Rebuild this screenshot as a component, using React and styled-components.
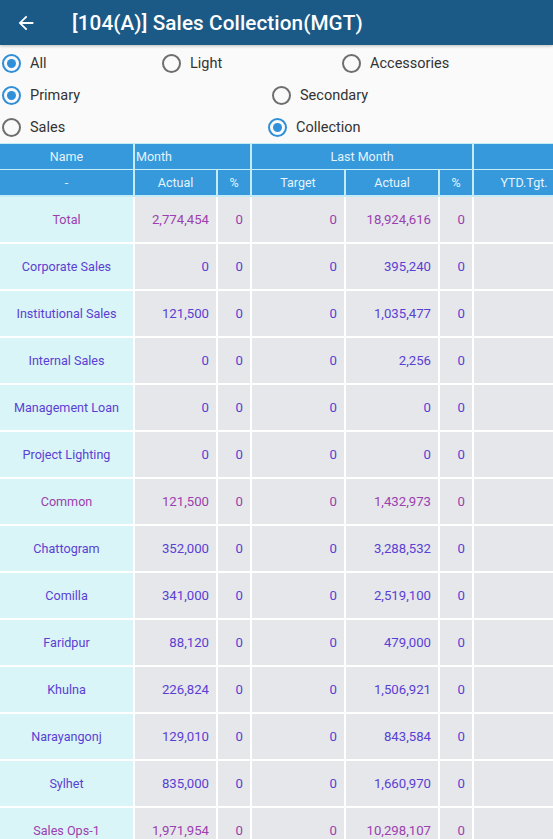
import React from "react";
import styled, { createGlobalStyle } from "styled-components";

const GlobalStyle = createGlobalStyle`
  html, body {
    margin: 0;
    padding: 0;
    background: #fafafa;
    font-family: Roboto, "Noto Sans", sans-serif;
    overflow: hidden;
  }
`;

const COLS = "133px 81px 32px 92px 92px 32px 100px";

const rows = [
  ["Total", "2,774,454", "0", "0", "18,924,616", "0", true],
  ["Corporate Sales", "0", "0", "0", "395,240", "0"],
  ["Institutional Sales", "121,500", "0", "0", "1,035,477", "0"],
  ["Internal Sales", "0", "0", "0", "2,256", "0"],
  ["Management Loan", "0", "0", "0", "0", "0"],
  ["Project Lighting", "0", "0", "0", "0", "0"],
  ["Common", "121,500", "0", "0", "1,432,973", "0", true],
  ["Chattogram", "352,000", "0", "0", "3,288,532", "0"],
  ["Comilla", "341,000", "0", "0", "2,519,100", "0"],
  ["Faridpur", "88,120", "0", "0", "479,000", "0"],
  ["Khulna", "226,824", "0", "0", "1,506,921", "0"],
  ["Narayangonj", "129,010", "0", "0", "843,584", "0"],
  ["Sylhet", "835,000", "0", "0", "1,660,970", "0"],
  ["Sales Ops-1", "1,971,954", "0", "0", "10,298,107", "0", true],
];

//!라디오 그룹
const radioRows = [
  {
    cols: "160px 180px 1fr",
    items: [
      { label: "All", checked: true },
      { label: "Light" },
      { label: "Accessories" },
    ],
  },
  {
    cols: "270px 1fr",
    items: [{ label: "Primary", checked: true }, { label: "Secondary" }],
  },
  {
    cols: "266px 1fr",
    items: [{ label: "Sales" }, { label: "Collection", checked: true }],
  },
];

const App = () => {
  return (
    <Page>
      <GlobalStyle />
      <TopBar>
        <BackIcon viewBox="0 0 24 24">
          <path d="M20 11H7.83l5.59-5.59L12 4l-8 8 8 8 1.41-1.41L7.83 13H20v-2z" />
        </BackIcon>
        <Title>[104(A)] Sales Collection(MGT)</Title>
      </TopBar>

      <Filters>
        {radioRows.map((row, idx) => (
          <RadioRow key={idx} $cols={row.cols}>
            {row.items.map((item) => (
              <RadioItem key={item.label}>
                <Circle $checked={item.checked} />
                <RadioLabel>{item.label}</RadioLabel>
              </RadioItem>
            ))}
          </RadioRow>
        ))}
      </Filters>

      <TableWrap>
        <HeadGrid>
          <HeadCell>Name</HeadCell>
          <HeadCell $span={2} $align="left">
            Month
          </HeadCell>
          <HeadCell $span={3}>Last Month</HeadCell>
          <HeadCell />
          <HeadCell>-</HeadCell>
          <HeadCell>Actual</HeadCell>
          <HeadCell>%</HeadCell>
          <HeadCell>Target</HeadCell>
          <HeadCell>Actual</HeadCell>
          <HeadCell>%</HeadCell>
          <HeadCell>YTD.Tgt.</HeadCell>
        </HeadGrid>

        <BodyGrid>
          {rows.map((r) => (
            <React.Fragment key={r[0]}>
              <NameCell $sum={r[6]}>{r[0]}</NameCell>
              <NumCell $sum={r[6]}>{r[1]}</NumCell>
              <NumCell $sum={r[6]}>{r[2]}</NumCell>
              <NumCell $sum={r[6]}>{r[3]}</NumCell>
              <NumCell $sum={r[6]}>{r[4]}</NumCell>
              <NumCell $sum={r[6]}>{r[5]}</NumCell>
              <NumCell />
            </React.Fragment>
          ))}
        </BodyGrid>
      </TableWrap>
    </Page>
  );
};
export default App;

const Page = styled.div`
  width: 553px;
  height: 839px;
  overflow: hidden;
  background: #fafafa;
`;

const TopBar = styled.div`
  height: 45px;
  background: #1b5a87;
  display: flex;
  align-items: center;
  padding-left: 15px;
  box-shadow: 0 1px 3px rgba(0, 0, 0, 0.25);
  position: relative;
  z-index: 1;
`;

const BackIcon = styled.svg`
  width: 22px;
  height: 22px;
  fill: #ffffff;
  margin-right: 35px;
`;

const Title = styled.h1`
  margin: 0;
  color: #ffffff;
  font-size: 20.7px;
  font-weight: 500;
  letter-spacing: 0.1px;
`;

const Filters = styled.div`
  padding: 2px 0 0 0;
`;

const RadioRow = styled.div`
  display: grid;
  grid-template-columns: ${(p) => p.$cols};
  height: 32px;
  align-items: center;
`;

const RadioItem = styled.div`
  display: flex;
  align-items: center;
  padding-left: 2px;
`;

const Circle = styled.span`
  box-sizing: border-box;
  width: 19px;
  height: 19px;
  border-radius: 50%;
  border: 2px solid ${(p) => (p.$checked ? "#2f8fd9" : "#6e6e6e")};
  display: flex;
  align-items: center;
  justify-content: center;
  margin-right: 9px;

  &::after {
    content: "";
    width: 9px;
    height: 9px;
    border-radius: 50%;
    background: ${(p) => (p.$checked ? "#2f8fd9" : "transparent")};
  }
`;

const RadioLabel = styled.span`
  font-size: 14.5px;
  color: #333333;
`;

const TableWrap = styled.div`
  width: 575px;
`;

const HeadGrid = styled.div`
  display: grid;
  grid-template-columns: ${COLS};
  grid-template-rows: 25px 25px;
  column-gap: 2px;
  row-gap: 1px;
  padding: 1px 0 2px 0;
  background: #c4ecf6;
`;

const HeadCell = styled.div`
  grid-column: span ${(p) => p.$span || 1};
  background: #3599dc;
  color: #e6f3fb;
  font-size: 12.5px;
  display: flex;
  align-items: center;
  justify-content: ${(p) => (p.$align === "left" ? "flex-start" : "center")};
  padding-left: ${(p) => (p.$align === "left" ? "1px" : "0")};
`;

const BodyGrid = styled.div`
  display: grid;
  grid-template-columns: ${COLS};
  grid-auto-rows: 45px;
  gap: 2px;
  background: #ffffff;
`;

const NameCell = styled.div`
  background: #daf5f7;
  color: ${(p) => (p.$sum ? "#9c3fb0" : "#5a3fd4")};
  font-size: 12.6px;
  display: flex;
  align-items: center;
  justify-content: center;
  white-space: nowrap;
`;

const NumCell = styled.div`
  background: #e5e7ea;
  color: ${(p) => (p.$sum ? "#9c3fb0" : "#5a3fd4")};
  font-size: 13.2px;
  display: flex;
  align-items: center;
  justify-content: flex-end;
  padding-right: 7px;
`;
